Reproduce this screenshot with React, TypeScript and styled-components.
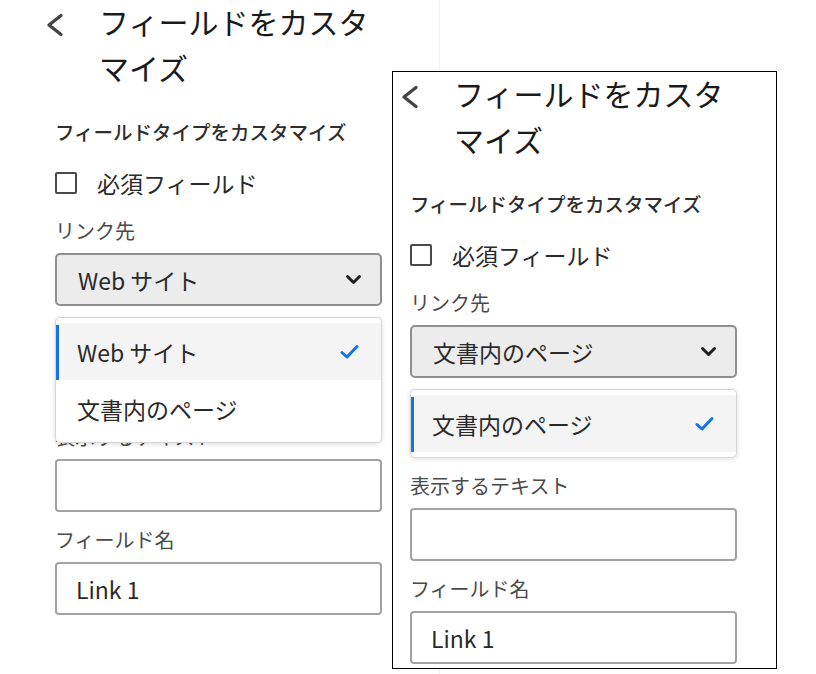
import React from "react";
import styled, { createGlobalStyle } from "styled-components";

const GlobalStyle = createGlobalStyle`
  html, body {
    margin: 0;
    padding: 0;
    background: #ffffff;
    overflow: hidden;
  }
  body {
    font-family: "Noto Sans CJK JP", "Noto Sans", sans-serif;
    color: #222222;
  }
`;

const Desktop = styled.div`
  display: flex;
  align-items: flex-start;
  height: 674px;
  padding-left: 38px;
  box-sizing: border-box;
`;

const Panel = styled.section<{ $framed?: boolean }>`
  position: relative;
  box-sizing: border-box;
  background: #ffffff;
  overflow: hidden;
  ${(p) =>
    p.$framed
      ? `
    width: 385px;
    height: 598px;
    margin-left: -48px;
    margin-top: 71px;
    border: 1px solid #000000;
    z-index: 1;
  `
      : `
    width: 402px;
    height: 674px;
    border-right: 1px solid #f2f2f2;
  `}
`;

const Header = styled.div`
  display: flex;
  align-items: flex-start;
  gap: 35px;
  padding-left: 7px;
  margin-top: -2px;
  height: 94px;
`;

const BackButton = styled.span`
  display: flex;
  align-items: center;
  height: 46px;
  margin-top: 4px;
  color: #444444;
`;

const Title = styled.h1`
  margin: 0;
  max-width: 290px;
  font-size: 30px;
  line-height: 46px;
  font-weight: 400;
  color: #1a1a1a;
`;

const Body = styled.div`
  padding-left: 17px;
  width: 327px;
`;

const SectionLabel = styled.div`
  margin-top: 28px;
  font-size: 19.5px;
  line-height: 24px;
  font-weight: 500;
  color: #2e2e2e;
`;

const CheckRow = styled.label`
  display: flex;
  align-items: center;
  gap: 20px;
  height: 30px;
  margin-top: 24px;
  font-size: 23px;
  color: #2a2a2a;
`;

const CheckBox = styled.span`
  width: 22px;
  height: 22px;
  box-sizing: border-box;
  border: 2px solid #4a4a4a;
  border-radius: 2px;
  background: #ffffff;
`;

const FieldGroup = styled.div<{ $gap?: number; $covered?: boolean }>`
  margin-top: ${(p) => p.$gap ?? 16}px;
  visibility: ${(p) => (p.$covered ? "hidden" : "visible")};
`;

const FieldLabel = styled.div`
  font-size: 20px;
  line-height: 24px;
  color: #4a4a4a;
  margin-bottom: 10px;
`;

const SelectWrap = styled.div`
  position: relative;
`;

const SelectBox = styled.div`
  display: flex;
  align-items: center;
  justify-content: space-between;
  box-sizing: border-box;
  height: 53px;
  padding: 0 18px 0 21px;
  background: #ececec;
  border: 2px solid #8f8f8f;
  border-radius: 5px;
  font-size: 23px;
  color: #2a2a2a;
`;

const TextInput = styled.div`
  display: flex;
  align-items: center;
  box-sizing: border-box;
  height: 53px;
  padding: 0 19px;
  background: #ffffff;
  border: 2px solid #a2a2a2;
  border-radius: 4px;
  font-size: 23px;
  color: #2a2a2a;
`;

const Popover = styled.ul<{ $floating?: boolean }>`
  list-style: none;
  margin: 11px 0 4px;
  padding: 5px 0;
  box-sizing: border-box;
  background: #ffffff;
  border: 1px solid #d6d6d6;
  border-radius: 5px;
  box-shadow: 0 1px 5px rgba(0, 0, 0, 0.14);
  ${(p) =>
    p.$floating &&
    `
    position: absolute;
    top: 100%;
    left: 0;
    right: 0;
    z-index: 2;
  `}
`;

const Option = styled.li<{ $selected?: boolean }>`
  position: relative;
  display: flex;
  align-items: center;
  justify-content: space-between;
  height: 57px;
  padding: 0 22px 0 21px;
  font-size: 23px;
  color: #2a2a2a;
  background: ${(p) => (p.$selected ? "#f4f4f4" : "transparent")};

  &::before {
    content: "";
    display: ${(p) => (p.$selected ? "block" : "none")};
    position: absolute;
    left: 0;
    top: 2px;
    bottom: 0;
    width: 3px;
    background: #1473e6;
  }
`;

const ChevronLeft = () => (
  <svg width="19" height="24" viewBox="0 0 19 24" fill="none">
    <path d="M16 2.5 L4 12 L16 21.5" stroke="currentColor" strokeWidth="3.4" strokeLinecap="round" strokeLinejoin="round" />
  </svg>
);

const ChevronDown = () => (
  <svg width="17" height="11" viewBox="0 0 17 11" fill="none">
    <path d="M2.5 2.5 L8.5 8.5 L14.5 2.5" stroke="#1f1f1f" strokeWidth="3" strokeLinecap="round" strokeLinejoin="round" />
  </svg>
);

const Check = () => (
  <svg width="19" height="16" viewBox="0 0 19 16" fill="none">
    <path d="M2 8.5 L7 13 L17 2.5" stroke="#1473e6" strokeWidth="3" strokeLinecap="round" strokeLinejoin="round" />
  </svg>
);

type FieldPanelProps = {
  framed?: boolean;
  selected: string;
  options: string[];
  floating?: boolean;
};

function FieldPanel({ framed, selected, options, floating }: FieldPanelProps) {
  return (
    <Panel $framed={framed}>
      <Header>
        <BackButton>
          <ChevronLeft />
        </BackButton>
        <Title>フィールドをカスタマイズ</Title>
      </Header>
      <Body>
        <SectionLabel>フィールドタイプをカスタマイズ</SectionLabel>
        <CheckRow>
          <CheckBox />
          必須フィールド
        </CheckRow>
        <FieldGroup $gap={21}>
          <FieldLabel>リンク先</FieldLabel>
          <SelectWrap>
            <SelectBox>
              {selected}
              <ChevronDown />
            </SelectBox>
            <Popover $floating={floating}>
              {options.map((o) => (
                <Option key={o} $selected={o === selected}>
                  {o}
                  {o === selected && <Check />}
                </Option>
              ))}
            </Popover>
          </SelectWrap>
        </FieldGroup>
        {floating && (
          <FieldGroup $covered aria-hidden>
            <FieldLabel>URL</FieldLabel>
            <TextInput />
          </FieldGroup>
        )}
        <FieldGroup>
          <FieldLabel>表示するテキスト</FieldLabel>
          <TextInput />
        </FieldGroup>
        <FieldGroup>
          <FieldLabel>フィールド名</FieldLabel>
          <TextInput>Link 1</TextInput>
        </FieldGroup>
      </Body>
    </Panel>
  );
}

export default function App() {
  return (
    <>
      <GlobalStyle />
      <Desktop>
        <FieldPanel selected="Web サイト" options={["Web サイト", "文書内のページ"]} floating />
        <FieldPanel framed selected="文書内のページ" options={["文書内のページ"]} />
      </Desktop>
    </>
  );
}
